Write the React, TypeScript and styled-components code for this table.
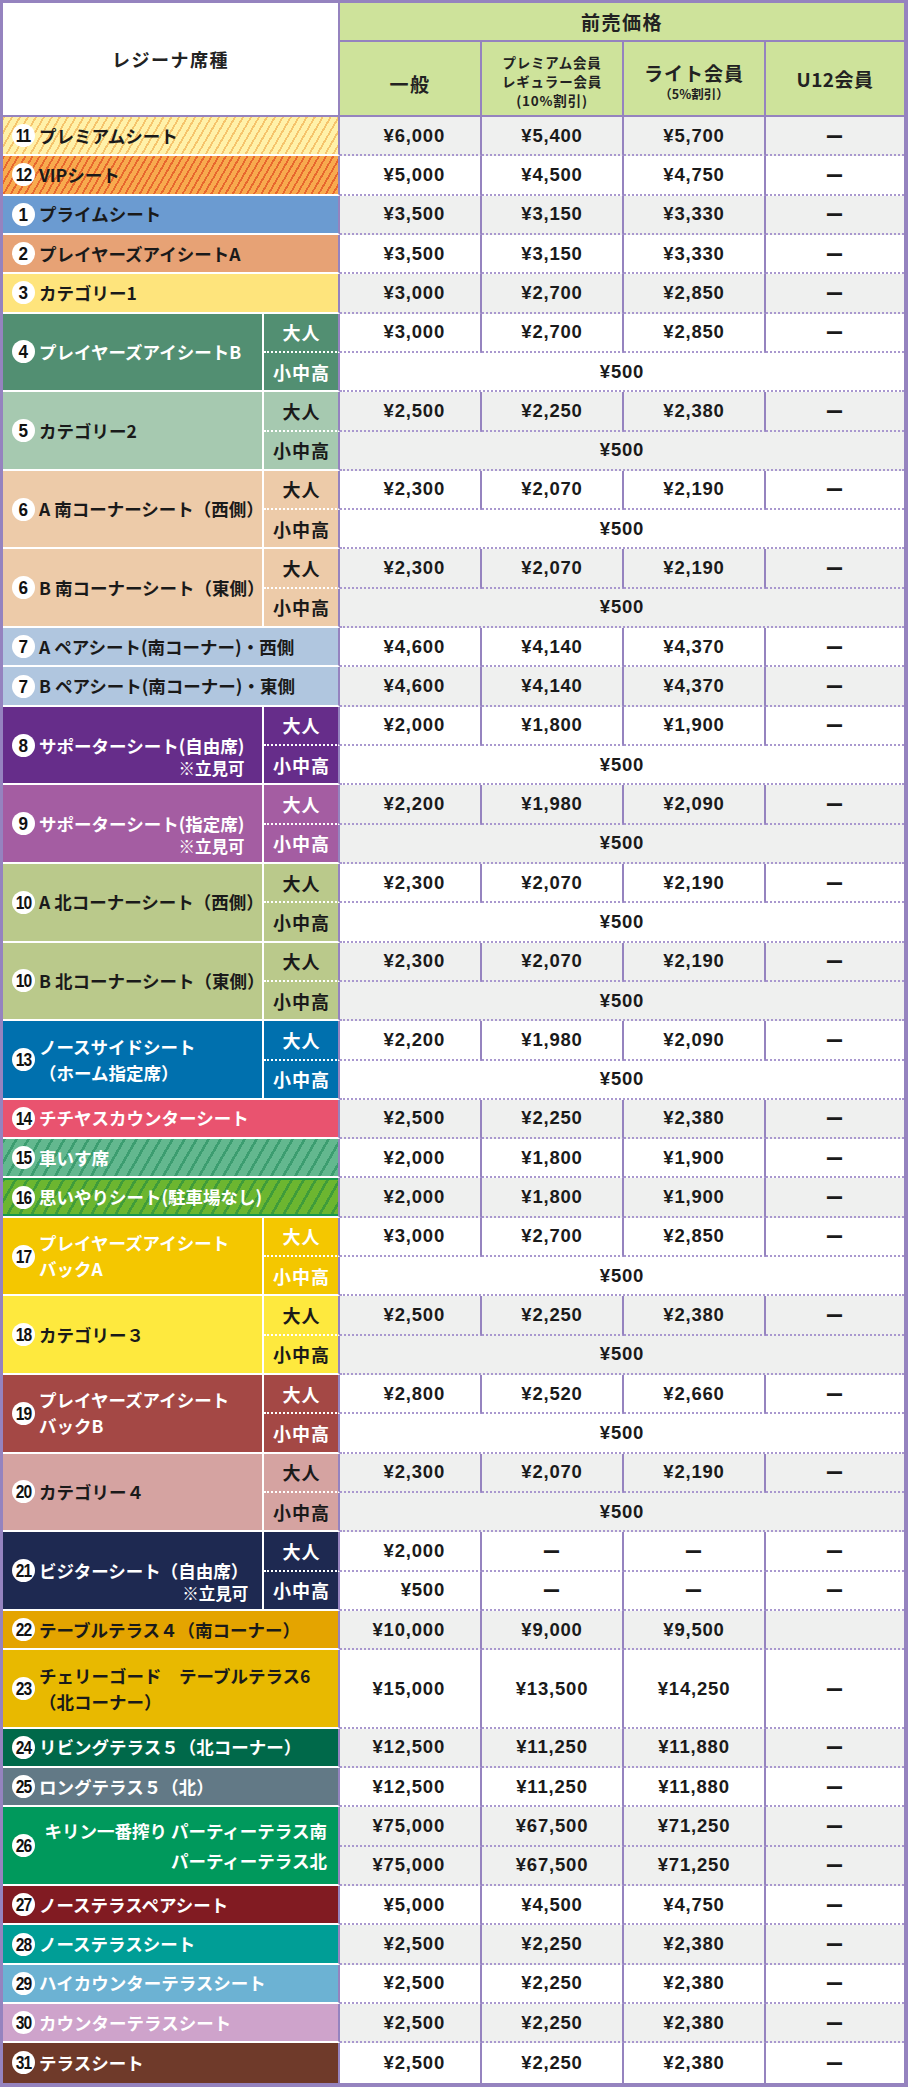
import React from 'react';
import styled, { createGlobalStyle } from 'styled-components';

const PURPLE = '#9583bf';
const DOT = '#a998cf';
const GRAY = '#eff0ef';
const HEAD = '#cee39b';
const INK = '#1a1a1a';
const UNIT = 39.32;

const GlobalStyle = createGlobalStyle`
  html, body { margin: 0; padding: 0; background: #fff; }
  body {
    font-family: "Noto Sans CJK JP", "Noto Sans", sans-serif;
    color: ${INK};
  }
`;

// diagonal "/" hatching used on a few seat rows
const hatch = (base: string, stripe: string, w: number, period: number) =>
  `repeating-linear-gradient(120deg, ${stripe} 0 ${w}px, ${base} ${w}px ${period}px)`;

const Table = styled.table`
  width: 908px;
  box-sizing: border-box;
  table-layout: fixed;
  border-collapse: separate;
  border-spacing: 0;
  border-style: solid;
  border-color: ${PURPLE};
  border-width: 3px 4px 4px 3px;
`;

const Col = styled.col<{ $w: number }>`
  width: ${p => p.$w}px;
`;

const Row = styled.tr<{ $h: number }>`
  height: ${p => p.$h}px;
`;

const HeadCell = styled.th<{ $white?: boolean; $end?: boolean; $shift?: number }>`
  box-sizing: border-box;
  padding: ${p => p.$shift || 0}px 0 0 0;
  background: ${p => (p.$white ? '#fff' : HEAD)};
  border-right: ${p => (p.$end ? 'none' : `2px solid ${PURPLE}`)};
  border-bottom: 2px solid ${PURPLE};
  text-align: center;
  vertical-align: middle;
  font-weight: 700;
  color: #222;
`;

const HeadText = styled.div<{ $size: number; $ls?: number; $lh?: number }>`
  font-size: ${p => p.$size}px;
  letter-spacing: ${p => p.$ls || 0}px;
  line-height: ${p => (p.$lh ? `${p.$lh}px` : 'normal')};
  white-space: nowrap;
`;

const NameCell = styled.td<{ $bg: string; $light?: boolean; $split?: boolean; $edge?: boolean; $last?: boolean }>`
  box-sizing: border-box;
  padding: 0 11px 0 9px;
  background: ${p => p.$bg};
  color: ${p => (p.$light ? '#fff' : INK)};
  border-right: 2px solid ${p => (p.$split ? '#fff' : PURPLE)};
  border-bottom: ${p => (p.$last ? 'none' : '2px solid #fff')};
  box-shadow: ${p => (p.$edge ? 'inset 0 2px 0 #17984a, inset 0 -2px 0 #17984a' : 'none')};
  vertical-align: middle;
  font-weight: 700;
`;

const NameWrap = styled.div`
  display: flex;
  align-items: center;
  gap: 4px;
`;

const Badge = styled.span`
  flex: none;
  width: 23px;
  height: 23px;
  border-radius: 50%;
  background: #fff;
  color: #111;
  display: flex;
  align-items: center;
  justify-content: center;
  font-family: "Liberation Sans", sans-serif;
  font-weight: 700;
  font-size: 19px;
  line-height: 1;
`;

const BadgeNum = styled.span<{ $two: boolean }>`
  display: inline-block;
  letter-spacing: ${p => (p.$two ? '-1px' : '0')};
  transform: scaleX(${p => (p.$two ? 0.82 : 0.9)});
`;

const NameText = styled.div<{ $lh: number; $right?: boolean; $pad?: boolean }>`
  display: flex;
  flex-direction: column;
  align-items: ${p => (p.$right ? 'flex-end' : 'flex-start')};
  flex: ${p => (p.$right ? 1 : 'none')};
  font-size: 17.5px;
  line-height: ${p => p.$lh}px;
  padding-top: ${p => (p.$pad ? p.$lh : 0)}px;
  white-space: nowrap;
`;

const Note = styled.span`
  align-self: flex-end;
  font-size: 16.5px;
`;

const SubCell = styled.td<{ $bg: string; $light?: boolean; $top?: boolean }>`
  box-sizing: border-box;
  padding: 0 0 0 1px;
  background: ${p => p.$bg};
  color: ${p => (p.$light ? '#fff' : INK)};
  border-right: 2px solid ${PURPLE};
  border-bottom: 2px ${p => (p.$top ? 'dotted' : 'solid')} #fff;
  text-align: center;
  vertical-align: middle;
  font-size: 18px;
  letter-spacing: 1px;
  font-weight: 700;
  white-space: nowrap;
`;

const Price = styled.td<{ $bg: string; $first?: boolean; $end?: boolean; $last?: boolean }>`
  box-sizing: border-box;
  padding: 0 ${p => (p.$first ? 35 : 0)}px 0 0;
  background: ${p => p.$bg};
  border-right: ${p => (p.$end ? 'none' : `2px solid ${PURPLE}`)};
  border-bottom: ${p => (p.$last ? 'none' : `2px dotted ${DOT}`)};
  text-align: ${p => (p.$first ? 'right' : 'center')};
  vertical-align: middle;
  font-family: "Liberation Sans", "Noto Sans CJK JP", sans-serif;
  font-weight: 700;
  font-size: 18.5px;
  letter-spacing: 0.8px;
  color: ${INK};
  white-space: nowrap;
`;

type Seat = {
  no: string;
  lines: string[];
  note?: string;
  bg: string;
  light?: boolean;
  split?: boolean;
  prices: string[];
  child?: string | string[];
  extra?: string[];
  tall?: boolean;
  right?: boolean;
  lh?: number;
  edge?: boolean;
};

const D = 'ー';

const seats: Seat[] = [
  { no: '11', lines: ['プレミアムシート'], bg: hatch('#fff1a9', '#f5c46c', 1.8, 6.9), prices: ['¥6,000', '¥5,400', '¥5,700', D] },
  { no: '12', lines: ['VIPシート'], bg: hatch('#f8aa4e', '#e7672e', 1.8, 6.2), prices: ['¥5,000', '¥4,500', '¥4,750', D] },
  { no: '1', lines: ['プライムシート'], bg: '#6b9bd1', prices: ['¥3,500', '¥3,150', '¥3,330', D] },
  { no: '2', lines: ['プレイヤーズアイシートA'], bg: '#e7a275', prices: ['¥3,500', '¥3,150', '¥3,330', D] },
  { no: '3', lines: ['カテゴリー1'], bg: '#fee47c', prices: ['¥3,000', '¥2,700', '¥2,850', D] },
  { no: '4', lines: ['プレイヤーズアイシートB'], bg: '#528f72', light: true, split: true, prices: ['¥3,000', '¥2,700', '¥2,850', D], child: '¥500' },
  { no: '5', lines: ['カテゴリー2'], bg: '#a6c9b0', split: true, prices: ['¥2,500', '¥2,250', '¥2,380', D], child: '¥500' },
  { no: '6', lines: ['A 南コーナーシート（西側）'], bg: '#edcba9', split: true, prices: ['¥2,300', '¥2,070', '¥2,190', D], child: '¥500' },
  { no: '6', lines: ['B 南コーナーシート（東側）'], bg: '#edcba9', split: true, prices: ['¥2,300', '¥2,070', '¥2,190', D], child: '¥500' },
  { no: '7', lines: ['A ペアシート(南コーナー)・西側'], bg: '#b0c6df', prices: ['¥4,600', '¥4,140', '¥4,370', D] },
  { no: '7', lines: ['B ペアシート(南コーナー)・東側'], bg: '#b0c6df', prices: ['¥4,600', '¥4,140', '¥4,370', D] },
  { no: '8', lines: ['サポーターシート(自由席)'], note: '※立見可', bg: '#662d8a', light: true, split: true, prices: ['¥2,000', '¥1,800', '¥1,900', D], child: '¥500' },
  { no: '9', lines: ['サポーターシート(指定席)'], note: '※立見可', bg: '#a45da2', light: true, split: true, prices: ['¥2,200', '¥1,980', '¥2,090', D], child: '¥500' },
  { no: '10', lines: ['A 北コーナーシート（西側）'], bg: '#bac98b', split: true, prices: ['¥2,300', '¥2,070', '¥2,190', D], child: '¥500' },
  { no: '10', lines: ['B 北コーナーシート（東側）'], bg: '#bac98b', split: true, prices: ['¥2,300', '¥2,070', '¥2,190', D], child: '¥500' },
  { no: '13', lines: ['ノースサイドシート', '（ホーム指定席）'], bg: '#0070ae', light: true, split: true, prices: ['¥2,200', '¥1,980', '¥2,090', D], child: '¥500' },
  { no: '14', lines: ['チチヤスカウンターシート'], bg: '#e9536f', light: true, prices: ['¥2,500', '¥2,250', '¥2,380', D] },
  { no: '15', lines: ['車いす席'], bg: hatch('#63b88f', '#3c9d70', 2.6, 10.4), light: true, prices: ['¥2,000', '¥1,800', '¥1,900', D] },
  { no: '16', lines: ['思いやりシート(駐車場なし)'], bg: hatch('#6cb630', '#3f9c3a', 2.6, 10.4), light: true, edge: true, prices: ['¥2,000', '¥1,800', '¥1,900', D] },
  { no: '17', lines: ['プレイヤーズアイシート', 'バックA'], bg: '#f4c700', light: true, split: true, prices: ['¥3,000', '¥2,700', '¥2,850', D], child: '¥500' },
  { no: '18', lines: ['カテゴリー３'], bg: '#fee93e', split: true, prices: ['¥2,500', '¥2,250', '¥2,380', D], child: '¥500' },
  { no: '19', lines: ['プレイヤーズアイシート', 'バックB'], bg: '#a44845', light: true, split: true, prices: ['¥2,800', '¥2,520', '¥2,660', D], child: '¥500' },
  { no: '20', lines: ['カテゴリー４'], bg: '#d5a3a1', split: true, prices: ['¥2,300', '¥2,070', '¥2,190', D], child: '¥500' },
  { no: '21', lines: ['ビジターシート（自由席）'], note: '※立見可', bg: '#1e2951', light: true, split: true, prices: ['¥2,000', D, D, D], child: ['¥500', D, D, D] },
  { no: '22', lines: ['テーブルテラス４（南コーナー）'], bg: '#e4a400', prices: ['¥10,000', '¥9,000', '¥9,500', ''] },
  { no: '23', lines: ['チェリーゴード　テーブルテラス6', '（北コーナー）'], bg: '#e8b900', tall: true, prices: ['¥15,000', '¥13,500', '¥14,250', D] },
  { no: '24', lines: ['リビングテラス５（北コーナー）'], bg: '#00694a', light: true, prices: ['¥12,500', '¥11,250', '¥11,880', D] },
  { no: '25', lines: ['ロングテラス５（北）'], bg: '#627986', light: true, prices: ['¥12,500', '¥11,250', '¥11,880', D] },
  { no: '26', lines: ['キリン一番搾り パーティーテラス南', 'パーティーテラス北'], bg: '#00995c', light: true, right: true, lh: 30, prices: ['¥75,000', '¥67,500', '¥71,250', D], extra: ['¥75,000', '¥67,500', '¥71,250', D] },
  { no: '27', lines: ['ノーステラスペアシート'], bg: '#811b22', light: true, prices: ['¥5,000', '¥4,500', '¥4,750', D] },
  { no: '28', lines: ['ノーステラスシート'], bg: '#009e96', light: true, prices: ['¥2,500', '¥2,250', '¥2,380', D] },
  { no: '29', lines: ['ハイカウンターテラスシート'], bg: '#6cb2d3', light: true, prices: ['¥2,500', '¥2,250', '¥2,380', D] },
  { no: '30', lines: ['カウンターテラスシート'], bg: '#cea3cb', light: true, prices: ['¥2,500', '¥2,250', '¥2,380', D] },
  { no: '31', lines: ['テラスシート'], bg: '#6f3a2a', light: true, prices: ['¥2,500', '¥2,250', '¥2,380', D] },
];

const SeatName = ({ seat }: { seat: Seat }) => {
  const lh = seat.lh || (seat.note ? 23 : 26);
  return (
    <NameWrap>
      <Badge>
        <BadgeNum $two={seat.no.length > 1}>{seat.no}</BadgeNum>
      </Badge>
      <NameText $lh={lh} $right={seat.right} $pad={!!seat.note}>
        {seat.lines.map((l, i) => (
          <span key={i}>{l}</span>
        ))}
        {seat.note && <Note>{seat.note}</Note>}
      </NameText>
    </NameWrap>
  );
};

const PriceCells = ({ values, bg, last }: { values: string[]; bg: string; last?: boolean }) => (
  <>
    {values.map((v, i) => (
      <Price key={i} $bg={bg} $first={i === 0} $end={i === 3} $last={last}>
        {v}
      </Price>
    ))}
  </>
);

const SeatRows = ({ seat, idx, last }: { seat: Seat; idx: number; last: boolean }) => {
  const bg = idx % 2 === 0 ? GRAY : '#fff';

  if (seat.split) {
    return (
      <>
        <Row $h={UNIT}>
          <NameCell rowSpan={2} $bg={seat.bg} $light={seat.light} $split $last={last}>
            <SeatName seat={seat} />
          </NameCell>
          <SubCell $bg={seat.bg} $light={seat.light} $top>大人</SubCell>
          <PriceCells values={seat.prices} bg={bg} />
        </Row>
        <Row $h={UNIT}>
          <SubCell $bg={seat.bg} $light={seat.light}>小中高</SubCell>
          {typeof seat.child === 'string' ? (
            <Price colSpan={4} $bg={bg} $end $last={last}>{seat.child}</Price>
          ) : (
            <PriceCells values={seat.child || []} bg={bg} last={last} />
          )}
        </Row>
      </>
    );
  }

  if (seat.extra) {
    return (
      <>
        <Row $h={UNIT}>
          <NameCell colSpan={2} rowSpan={2} $bg={seat.bg} $light={seat.light} $last={last}>
            <SeatName seat={seat} />
          </NameCell>
          <PriceCells values={seat.prices} bg={bg} />
        </Row>
        <Row $h={UNIT}>
          <PriceCells values={seat.extra} bg={bg} last={last} />
        </Row>
      </>
    );
  }

  return (
    <Row $h={seat.tall ? UNIT * 2 : UNIT}>
      <NameCell colSpan={2} $bg={seat.bg} $light={seat.light} $edge={seat.edge} $last={last}>
        <SeatName seat={seat} />
      </NameCell>
      <PriceCells values={seat.prices} bg={bg} last={last} />
    </Row>
  );
};

const App = () => (
  <>
    <GlobalStyle />
    <Table>
      <colgroup>
        <Col $w={261} />
        <Col $w={76} />
        <Col $w={142} />
        <Col $w={142} />
        <Col $w={142} />
        <Col $w={138} />
      </colgroup>
      <thead>
        <Row $h={39}>
          <HeadCell rowSpan={2} colSpan={2} $white>
            <HeadText $size={18} $ls={1.5}>レジーナ席種</HeadText>
          </HeadCell>
          <HeadCell colSpan={4} $end>
            <HeadText $size={19} $ls={1.5}>前売価格</HeadText>
          </HeadCell>
        </Row>
        <Row $h={75}>
          <HeadCell $shift={9}>
            <HeadText $size={19} $ls={1.5}>一般</HeadText>
          </HeadCell>
          <HeadCell $shift={6}>
            <HeadText $size={13.5} $ls={0.8} $lh={19}>
              プレミアム会員
              <br />
              レギュラー会員
              <br />
              (10%割引)
            </HeadText>
          </HeadCell>
          <HeadCell $shift={6}>
            <HeadText $size={19} $ls={1} $lh={24}>ライト会員</HeadText>
            <HeadText $size={12.5} $lh={18}>（5%割引）</HeadText>
          </HeadCell>
          <HeadCell $end>
            <HeadText $size={19} $ls={0.5}>U12会員</HeadText>
          </HeadCell>
        </Row>
      </thead>
      <tbody>
        {seats.map((s, i) => (
          <SeatRows key={i} seat={s} idx={i} last={i === seats.length - 1} />
        ))}
      </tbody>
    </Table>
  </>
);

export default App;
